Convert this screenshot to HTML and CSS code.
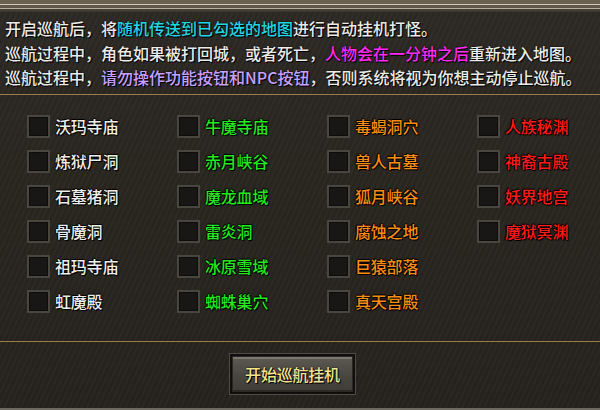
FILE: index.html
```html
<!DOCTYPE html>
<html lang="zh-CN">
<head>
<meta charset="utf-8">
<link rel="stylesheet" href="styles.css">
</head>
<body>
<div class="panel">
  <div class="top-band"></div>
  <div class="intro">
    <p>开启巡航后，将<span class="cyan">随机传送到已勾选的地图</span>进行自动挂机打怪。</p>
    <p>巡航过程中，角色如果被打回城，或者死亡，<span class="magenta">人物会在一分钟之后</span>重新进入地图。</p>
    <p>巡航过程中，<span class="lavender">请勿操作功能按钮和NPC按钮</span>，否则系统将视为你想主动停止巡航。</p>
  </div>
  <div class="divider"></div>
  <div class="maps">
    <label class="item white"><span class="box"></span>沃玛寺庙</label>
    <label class="item white"><span class="box"></span>炼狱尸洞</label>
    <label class="item white"><span class="box"></span>石墓猪洞</label>
    <label class="item white"><span class="box"></span>骨魔洞</label>
    <label class="item white"><span class="box"></span>祖玛寺庙</label>
    <label class="item white"><span class="box"></span>虹魔殿</label>
    <label class="item green"><span class="box"></span>牛魔寺庙</label>
    <label class="item green"><span class="box"></span>赤月峡谷</label>
    <label class="item green"><span class="box"></span>魔龙血域</label>
    <label class="item green"><span class="box"></span>雷炎洞</label>
    <label class="item green"><span class="box"></span>冰原雪域</label>
    <label class="item green"><span class="box"></span>蜘蛛巢穴</label>
    <label class="item orange"><span class="box"></span>毒蝎洞穴</label>
    <label class="item orange"><span class="box"></span>兽人古墓</label>
    <label class="item orange"><span class="box"></span>狐月峡谷</label>
    <label class="item orange"><span class="box"></span>腐蚀之地</label>
    <label class="item orange"><span class="box"></span>巨猿部落</label>
    <label class="item orange"><span class="box"></span>真天宫殿</label>
    <label class="item red"><span class="box"></span>人族秘渊</label>
    <label class="item red"><span class="box"></span>神裔古殿</label>
    <label class="item red"><span class="box"></span>妖界地宫</label>
    <label class="item red"><span class="box"></span>魔狱冥渊</label>
  </div>
  <div class="divider lower"></div>
  <div class="actions">
    <button class="start">开始巡航挂机</button>
  </div>
  <div class="bottom-edge"></div>
</div>
</body>
</html>
```

FILE: styles.css
```css
* { box-sizing: border-box; }
html, body { margin: 0; padding: 0; }
body {
  width: 600px;
  height: 410px;
  overflow: hidden;
  background: #27231f;
  font-family: "Noto Sans CJK SC", "Noto Sans", sans-serif;
}
.panel {
  width: 600px;
  height: 410px;
  display: flex;
  flex-direction: column;
  background:
    repeating-linear-gradient(115deg, rgba(255,255,255,0.018) 0 2px, rgba(0,0,0,0.02) 2px 5px),
    linear-gradient(180deg, #2d2925 0%, #29251f 50%, #26231f 100%);
}
.top-band {
  height: 12px;
  background: linear-gradient(180deg,
    #6a624f 0, #6a624f 4px,
    #d2cab4 4px, #d2cab4 5px,
    #5f584a 5px, #5f584a 8px,
    #b8b09b 8px, #b8b09b 9px,
    #48433a 9px, #3a3630 12px);
}
.intro {
  padding: 4px 0 0 5px;
  height: 82px;
  color: #ecebe6;
  font-size: 16px;
  font-weight: 500;
  letter-spacing: 0;
  line-height: 24.5px;
  text-shadow: 1px 1px 0 #000, 0 0 2px #000;
}
.intro p { margin: 0; white-space: nowrap; }
.cyan { color: #22d6e2; }
.magenta { color: #ff2bf2; }
.lavender { color: #c9a0ff; }
.divider {
  height: 1px;
  background: #9c7d45;
}
.maps {
  margin-top: 20px;
  padding-left: 27px;
  display: grid;
  grid-template-rows: repeat(6, 23px);
  grid-auto-flow: column;
  grid-auto-columns: 150px;
  row-gap: 12px;
  height: 210px;
}
.item {
  display: flex;
  align-items: center;
  gap: 5px;
  font-size: 16px;
  font-weight: 500;
  letter-spacing: -0.2px;
  line-height: 23px;
  text-shadow: 1px 1px 0 #000, -1px 0 0 #000, 0 -1px 0 #000, 0 0 2px #000;
  white-space: nowrap;
}
.box {
  width: 23px;
  height: 23px;
  flex: none;
  background: #181716;
  border: 2px solid #48463f;
  box-shadow: inset 0 0 0 1px #0c0c0b;
}
.white { color: #eeeeea; }
.green { color: #25e81e; }
.orange { color: #f78d12; }
.red { color: #ff1c18; }
.divider.lower { margin-top: 16px; }
.actions {
  flex: 1;
  display: flex;
  justify-content: center;
  align-items: flex-start;
  padding-top: 12px;
  padding-right: 15px;
}
.start {
  width: 125px;
  height: 40px;
  border: 2px solid #0f0e0c;
  outline: 1px solid #514d46;
  background: linear-gradient(180deg, #5f5b53 0%, #4b4842 50%, #3f3c37 100%);
  box-shadow: inset 0 0 0 1px #2a2824, inset 0 3px 0 #7d786e, inset 0 -2px 0 #2b2925;
  color: #f2e38e;
  font-family: "Noto Sans CJK SC", sans-serif;
  font-size: 16px;
  font-weight: 500;
  letter-spacing: -0.2px;
  text-shadow: 1px 1px 0 #000, 0 0 2px #000;
  padding: 0;
  cursor: pointer;
}
.bottom-edge {
  height: 2px;
  background: #6d6960;
}
```
